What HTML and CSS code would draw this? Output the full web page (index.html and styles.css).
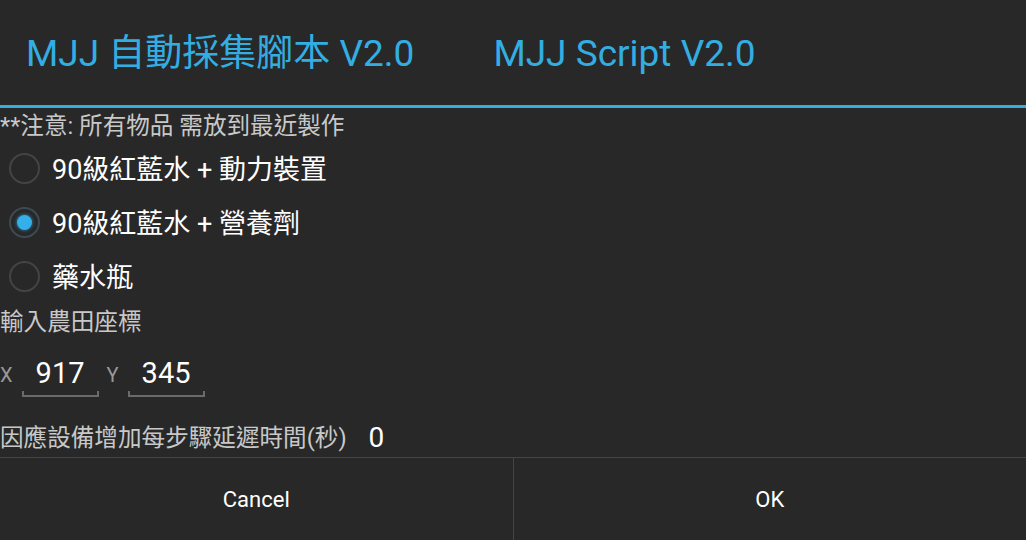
FILE: index.html
```html
<!DOCTYPE html>
<html lang="zh-Hant">
<head>
<meta charset="utf-8">
<title>MJJ Script</title>
<link rel="stylesheet" href="styles.css">
</head>
<body>
<div class="dialog">
  <header class="header">
    <span class="title">MJJ 自動採集腳本 V2.0</span>
    <span class="title title-en">MJJ Script V2.0</span>
  </header>
  <div class="rule"></div>
  <main class="content">
    <div class="note">**注意: 所有物品 需放到最近製作</div>
    <div class="radio-row"><span class="radio"></span><span class="radio-label">90級紅藍水 + 動力裝置</span></div>
    <div class="radio-row"><span class="radio checked"></span><span class="radio-label">90級紅藍水 + 營養劑</span></div>
    <div class="radio-row"><span class="radio"></span><span class="radio-label">藥水瓶</span></div>
    <div class="note label">輸入農田座標</div>
    <div class="coords">
      <span class="axis">X</span>
      <span class="field">917</span>
      <span class="axis">Y</span>
      <span class="field">345</span>
    </div>
    <div class="delay">
      <span class="delay-text">因應設備增加每步驟延遲時間(秒)</span>
      <span class="delay-value">0</span>
    </div>
  </main>
  <footer class="buttons">
    <div class="btn">Cancel</div>
    <div class="btn">OK</div>
  </footer>
</div>
</body>
</html>
```

FILE: styles.css
```css
html, body {
  margin: 0;
  padding: 0;
  background: #282828;
}
body {
  font-family: Roboto, "Noto Sans CJK TC", sans-serif;
  color: #fff;
}
.dialog {
  width: 1026px;
  height: 540px;
  display: flex;
  flex-direction: column;
  overflow: hidden;
}
.dialog > *, .content > * {
  flex-shrink: 0;
}
.header {
  height: 105px;
  display: flex;
  align-items: center;
  padding-left: 26px;
  gap: 79px;
  box-sizing: border-box;
}
.title {
  color: #33aee2;
  font-size: 37px;
  line-height: 1;
  padding-top: 2px;
}
.rule {
  height: 3px;
  background: #33aee2;
}
.content {
  height: 349px;
  display: flex;
  flex-direction: column;
}
.note {
  font-size: 23.6px;
  color: #c8c8c8;
  line-height: 34px;
  height: 34px;
  white-space: nowrap;
  padding-top: 1px;
  box-sizing: border-box;
}
.radio-row {
  height: 54px;
  display: flex;
  align-items: center;
}
.radio {
  width: 27px;
  height: 27px;
  margin-left: 9px;
  border: 2px solid #444;
  border-radius: 50%;
  box-sizing: content-box;
  display: flex;
  align-items: center;
  justify-content: center;
  margin-bottom: 2px;
}
.radio.checked {
  border-color: #3e4a52;
}
.radio.checked::after {
  content: "";
  width: 15px;
  height: 15px;
  border-radius: 50%;
  background: #33b0ea;
  box-shadow: 0 0 3px 1px rgba(51, 176, 234, 0.45);
}
.radio-label {
  margin-left: 12px;
  font-size: 27px;
  color: #fff;
  white-space: nowrap;
  padding-bottom: 4px;
}
.coords {
  height: 72px;
  display: flex;
  align-items: center;
}
.axis {
  font-size: 20px;
  color: #999;
  margin-top: 2px;
}
.field {
  position: relative;
  width: 77px;
  margin-left: 9px;
  margin-right: 8px;
  text-align: center;
  font-size: 29px;
  color: #fff;
  padding-bottom: 2px;
}
.field::after {
  content: "";
  position: absolute;
  left: 0;
  right: 0;
  bottom: -5px;
  height: 4px;
  border: 2px solid #6a6a6a;
  border-top: none;
}
.delay {
  height: 47px;
  display: flex;
  align-items: flex-end;
  gap: 22px;
  padding-bottom: 4px;
  box-sizing: border-box;
}
.delay-text {
  font-size: 23.6px;
  color: #c8c8c8;
  line-height: 30px;
  white-space: nowrap;
}
.delay-value {
  font-size: 28px;
  line-height: 30px;
  color: #fff;
}
.buttons {
  height: 82px;
  border-top: 1px solid #444;
  display: flex;
}
.btn {
  flex: 1;
  display: flex;
  align-items: center;
  justify-content: center;
  font-size: 22px;
  color: #fff;
}
.btn + .btn {
  border-left: 1px solid #444;
}
```
